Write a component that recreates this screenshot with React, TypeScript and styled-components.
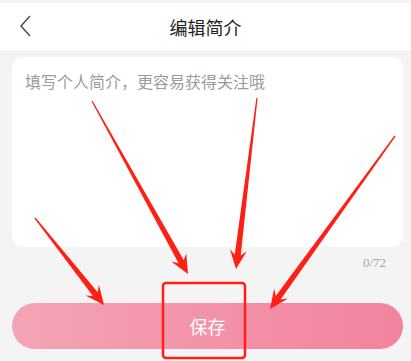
import React from "react";
import styled, { createGlobalStyle } from "styled-components";

const Global = createGlobalStyle`
  html, body { margin: 0; padding: 0; background: #f4f4f4; }
  body { font-family: "Noto Sans CJK SC", "Noto Sans", sans-serif; }
  * { box-sizing: border-box; }
`;

const Page = styled.div`
  position: relative;
  width: 411px;
  height: 361px;
  overflow: hidden;
  padding-top: 3px;
  background: #f4f4f4;
`;

const Header = styled.div`
  height: 47px;
  background: #fff;
  display: flex;
  align-items: center;
  justify-content: center;
  position: relative;
`;

const BackButton = styled.button`
  position: absolute;
  left: 14px;
  top: 10px;
  width: 22px;
  height: 26px;
  padding: 0;
  border: 0;
  background: transparent;
  display: flex;
  align-items: center;
  justify-content: center;
`;

const Title = styled.h1`
  margin: 0;
  font-size: 18px;
  font-weight: 400;
  color: #222;
  line-height: 24px;
`;

const Body = styled.div`
  padding: 7px 8px 0 12px;
  display: flex;
  flex-direction: column;
`;

const Card = styled.div`
  height: 190px;
  background: #fff;
  border-radius: 11px;
  padding: 14px 13px;
`;

const Placeholder = styled.div`
  font-size: 16px;
  line-height: 21px;
  color: #9b9b9b;
`;

const Counter = styled.div`
  margin-top: 8px;
  padding-right: 17px;
  text-align: right;
  font-family: "Liberation Serif", serif;
  font-size: 13px;
  line-height: 15px;
  color: #a8a8a8;
`;

const SaveButton = styled.button`
  margin-top: 33px;
  width: 391px;
  height: 46px;
  border: 0;
  border-radius: 23px;
  background: linear-gradient(90deg, #f4a4b6 0%, #f394aa 45%, #f2839e 100%);
  color: #fff;
  font-family: "Noto Sans CJK SC", sans-serif;
  font-size: 18px;
  font-weight: 400;
  display: flex;
  align-items: center;
  justify-content: center;
  padding: 0;
`;

const Overlay = styled.svg`
  position: absolute;
  left: 0;
  top: 0;
  pointer-events: none;
`;

type Pt = [number, number];

function arrowPoints(tail: Pt, tip: Pt): string {
  const dx = tip[0] - tail[0];
  const dy = tip[1] - tail[1];
  const L = Math.hypot(dx, dy);
  const d: Pt = [dx / L, dy / L];
  const n: Pt = [-d[1], d[0]];
  const h = 16;
  const at = (t: number, w: number): Pt => [
    tip[0] - d[0] * t + n[0] * w,
    tip[1] - d[1] * t + n[1] * w,
  ];
  const pts: Pt[] = [
    at(L, 0.6),
    at(h - 2, 3),
    at(h + 3, 8.5),
    at(0, 0),
    at(h + 3, -8.5),
    at(h - 2, -3),
    at(L, -0.6),
  ];
  return pts.map((p) => `${p[0].toFixed(1)},${p[1].toFixed(1)}`).join(" ");
}

const arrows: [Pt, Pt][] = [
  [[35, 218], [104, 305]],
  [[92, 101], [188, 274]],
  [[257, 98], [236, 269]],
  [[395, 136], [270, 309]],
];

export default function App() {
  return (
    <>
      <Global />
      <Page>
        <Header>
          <BackButton aria-label="back">
            <svg width="14" height="24" viewBox="0 0 14 24">
              <path d="M12 2 L3 12 L12 22" fill="none" stroke="#555" strokeWidth="1.6" />
            </svg>
          </BackButton>
          <Title>编辑简介</Title>
        </Header>
        <Body>
          <Card>
            <Placeholder>填写个人简介，更容易获得关注哦</Placeholder>
          </Card>
          <Counter>0/72</Counter>
          <SaveButton>保存</SaveButton>
        </Body>
        <Overlay width="411" height="361" viewBox="0 0 411 361">
          {arrows.map(([t, p], i) => (
            <polygon key={i} points={arrowPoints(t, p)} fill="#ff1f14" />
          ))}
          <rect x="163" y="283" width="82" height="75" rx="3" fill="none" stroke="#ff1f14" strokeWidth="2.5" />
        </Overlay>
      </Page>
    </>
  );
}
